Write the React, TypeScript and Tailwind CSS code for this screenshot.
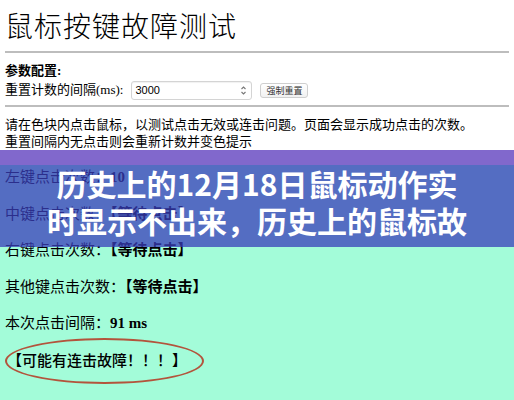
import React from 'react';

const rows = [
  { label: '左键点击次数：', value: '10' },
  { label: '中键点击次数：', value: '【等待点击】' },
  { label: '右键点击次数：', value: '【等待点击】' },
  { label: '其他键点击次数：', value: '【等待点击】' },
  { label: '本次点击间隔：', value: '91 ms' },
];

const App = () => {
  return (
    <div className="relative w-[514px] h-[400px] overflow-hidden bg-white text-black font-['Liberation_Serif','Noto_Sans_CJK_SC',serif]">
      <div className="px-[5px]">
        <h1 className="h-[50px] text-[28px] leading-[50px] font-light font-['Noto_Sans_CJK_SC',sans-serif] tracking-[1px]">
          鼠标按键故障测试
        </h1>
        <div className="mt-[1px] h-[2px] bg-[#bdbdbd]" />

        <div className="mt-[9px] text-[13px] leading-[18px] font-bold">参数配置:</div>
        <div className="flex h-[20px] items-center text-[13px]">
          <span>重置计数的间隔(ms):</span>
          <div className="ml-[8px] flex h-[19px] w-[121px] items-center justify-between rounded-[3px] border border-[#d4d4d4] bg-white pl-[3px] pr-[4px] shadow-[inset_0_1px_1px_rgba(0,0,0,0.06)]">
            <span className="font-['Liberation_Sans',sans-serif] text-[11px] leading-none">3000</span>
            <svg width="7" height="11" viewBox="0 0 7 11" fill="none" stroke="#777" strokeWidth="1.1">
              <path d="M1.5 4 L3.5 2 L5.5 4" />
              <path d="M1.5 7 L3.5 9 L5.5 7" />
            </svg>
          </div>
          <button className="ml-[8px] flex h-[15px] items-center rounded-[3px] border border-[#cfcfcf] bg-gradient-to-b from-white to-[#f1f1f1] px-[5px] font-['Noto_Sans_CJK_SC',sans-serif] text-[9px] leading-none text-[#333]">
            强制重置
          </button>
        </div>

        <div className="mt-[5px] h-[2px] bg-[#bdbdbd]" />

        <p className="mt-[9px] text-[13px] leading-[17px]">
          请在色块内点击鼠标，以测试点击无效或连击问题。页面会显示成功点击的次数。
        </p>
        <p className="text-[13px] leading-[17px]">重置间隔内无点击则会重新计数并变色提示</p>
      </div>

      <div className="relative h-[250px] bg-[#a3fcd9] px-[5px] pt-[9px] text-[15px]">
        {rows.map((r) => (
          <div key={r.label} className="h-[36.6px] leading-[36.6px]">
            <span>{r.label}</span>
            <span className="font-bold">{r.value}</span>
          </div>
        ))}
        <div className="relative h-[36.6px] pl-[2px] font-['Noto_Sans_CJK_SC',sans-serif] text-[15px] font-medium leading-[36.6px]">
          【可能有连击故障！！！】
          <div className="absolute left-[0px] top-[-4px] h-[46px] w-[199px] rounded-[50%] border-[2.5px] border-[#b3543c]" />
        </div>
      </div>

      {/* overlay banner */}
      <div className="absolute left-0 top-[150px] w-full">
        <div className="h-[15px] bg-[#8168cc]" />
        <div className="h-[82px] bg-[rgba(58,62,186,0.75)] text-center font-['Noto_Sans_CJK_SC',sans-serif] text-[30px] font-bold leading-[37px] text-white">
          <div>历史上的12月18日鼠标动作实</div>
          <div>时显示不出来，历史上的鼠标故</div>
        </div>
      </div>
    </div>
  );
};

export default App;
